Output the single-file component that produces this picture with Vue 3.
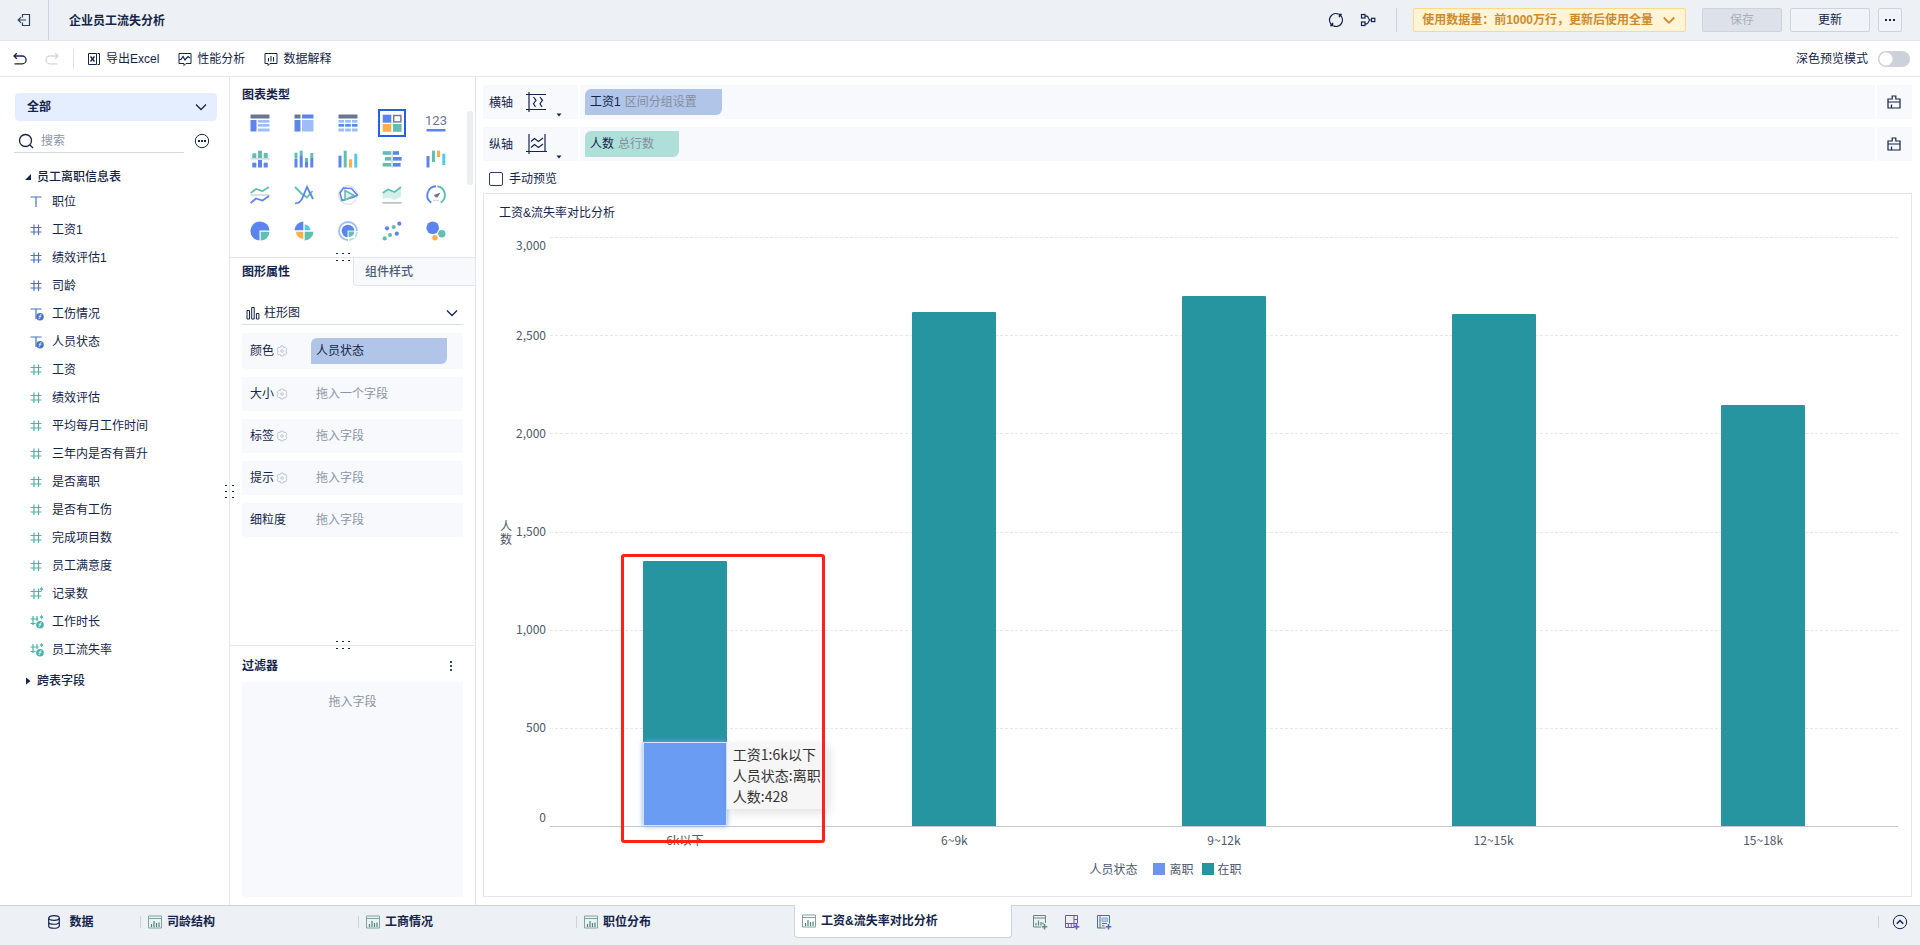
<script setup>
import { ref } from 'vue'

const scope = ref('全部')
const shape = ref('柱形图')
const keyword = ref('')
const manual = ref(false)
const dark = ref(false)

const blue = '#5b84ec', light = '#9ebcf6', teal = '#63beb2', gray = '#6b7690', pale = '#d3d7e0', orange = '#fcb04c', cyan = '#54c6f2'
const r = (x, y, w, h, c) => `<rect x="${x}" y="${y}" width="${w}" height="${h}" fill="${c}"/>`
const l = (pts, c, w = 1.8) => `<polyline points="${pts}" fill="none" stroke="${c}" stroke-width="${w}"/>`
const c = (x, y, rad, color) => `<circle cx="${x}" cy="${y}" r="${rad}" fill="${color}"/>`

const chartTypes = [
  { name: '分组表', art: r(0.5, 1.5, 19, 4, gray) + r(0.5, 7, 6, 11.5, blue) + r(8, 7, 11.5, 2.7, light) + r(8, 11, 11.5, 2.7, light) + r(8, 15.5, 11.5, 3, light) },
  { name: '交叉表', art: r(0.5, 1.5, 6, 4, gray) + r(8, 1.5, 11.5, 4, blue) + r(0.5, 7, 6, 11.5, blue) + r(8, 7, 11.5, 11.5, light) },
  { name: '明细表', art: r(0.5, 1.5, 19, 4, gray) + [0.5, 7.2, 13.9].map(x => r(x, 7, 5.6, 2.7, light) + r(x, 11, 5.6, 2.7, blue) + r(x, 15.5, 5.6, 3, light)).join('') },
  { name: '自定义图表', active: true, art: r(0.7, 1.7, 8.6, 8, blue) + '<rect x="11.7" y="2.5" width="7.2" height="6.4" fill="#fff" stroke="#6b7690" stroke-width="1.4"/>' + r(0.7, 11, 8.6, 7.8, orange) + r(11, 11, 8.6, 7.8, teal) },
  { name: '指标卡', art: '<text x="10" y="12" text-anchor="middle" font-family="Roboto, sans-serif" font-size="13" fill="#6b7690">123</text>' + r(0.5, 16, 19, 2.5, blue) },
  { name: '对比柱形图', art: r(2.3, 4.3, 4, 4.7, teal) + r(8, 1.7, 4, 7.3, teal) + r(13.7, 4, 4, 5, teal) + r(0.5, 9, 19, 1.6, pale) + r(2.3, 13.7, 4, 4.8, blue) + r(8, 11, 4, 7.5, blue) + r(13.7, 13.7, 4, 4.8, blue) },
  { name: '堆积柱形图', art: r(0.5, 3.7, 3, 6, teal) + r(0.5, 10, 3, 8.5, blue) + r(5.7, 1.7, 3, 4.6, teal) + r(5.7, 6.3, 3, 12.2, blue) + r(11, 9, 3, 4, teal) + r(11, 13, 3, 5.5, blue) + r(16.3, 4, 3, 5, teal) + r(16.3, 9, 3, 9.5, blue) },
  { name: '多系列柱形图', art: r(0.5, 6.7, 3, 11.8, blue) + r(5.7, 1.7, 3, 16.8, teal) + r(11, 10.3, 3, 8.2, orange) + r(16.3, 4.7, 3, 13.8, cyan) },
  { name: '对比条形图', art: r(0.7, 2.2, 8.6, 3.6, teal) + r(3, 8, 6.3, 3.6, teal) + r(0.7, 14, 8.6, 3.6, teal) + r(9.3, 1.5, 1.6, 17, pale) + r(11, 2.2, 6, 3.6, blue) + r(11, 8, 8.6, 3.6, blue) + r(11, 14, 7.6, 3.6, blue) },
  { name: '瀑布图', art: r(0.5, 7, 3, 11.5, blue) + r(6, 1.7, 3, 11.3, teal) + r(11, 1.7, 3, 6.3, orange) + r(16.3, 4.7, 3, 11.3, cyan) },
  { name: '对比折线图', art: l('0.7,8 6,4 12.5,6 19,2', teal) + r(0.5, 9.2, 19, 1.6, pale) + l('0.7,18 6,13.5 12.5,15.5 19,11', blue) },
  { name: '折线图', art: l('1,2 7,8 13,12.5 18.5,6', teal) + l('1,18.5 5,17.5 8,14 13,2 19,14', blue) },
  { name: '雷达图', art: '<circle cx="10" cy="10" r="9.3" fill="none" stroke="#d3d7e0"/><polygon points="5.5,3 13.5,3.5 19.3,10 16,12 4,15.5 2,8" fill="none" stroke="#5b84ec" stroke-width="1.6"/><polygon points="7,5.5 16,10.5 7,15" fill="#e6e9ee" stroke="#63beb2" stroke-width="1.6"/>' },
  { name: '面积图', art: '<path d="M.7 8 6 4.5 12.5 7 19 2V11.5L12.5 15 6 12.5.7 14z" fill="#d3efe9"/>' + l('0.7,8 6,4.5 12.5,7 19,2', teal) + r(0.5, 17.2, 19, 1.4, '#a9b1c1') },
  { name: '仪表盘', art: '<path d="M5.2 17.6A9 9 0 0 1 10 1.2" fill="none" stroke="#5b84ec" stroke-width="1.9"/><path d="M11.5 1.2A9 9 0 0 1 14.8 17.6" fill="none" stroke="#63beb2" stroke-width="1.9"/><path d="M8 10 14.5 7.5 11.5 12.5 9 12z" fill="#6b7690"/><path d="M7 15.5h6" stroke="#d3d7e0" stroke-width="1.2"/>' },
  { name: '饼图', art: c(10, 10, 9.6, blue) + '<path d="M9.5 9.5H20V20H9.5z" fill="#fff"/><path d="M10.7 10.7H19.5A9 9 0 0 1 10.7 19.6z" fill="#63beb2"/>' },
  { name: '玫瑰图', art: '<path d="M9.3 9.3V.5A9.3 9.3 0 0 0 .5 9.3z" fill="#5b84ec"/><path d="M10.7 9.3V3.5A6.3 6.3 0 0 1 16.5 9.3z" fill="#54c6f2"/><path d="M9.3 10.7V18A7.3 7.3 0 0 1 2 10.7z" fill="#fcb04c"/><path d="M10.7 10.7V19.5A9 9 0 0 0 19.5 10.7z" fill="#63beb2"/>' },
  { name: '多层饼图', art: '<path d="M10 19A9 9 0 1 1 19 10" fill="none" stroke="#9ebcf6" stroke-width="1.8"/><path d="M19 11.2A9 9 0 0 1 11.2 19" fill="none" stroke="#b5e0d9" stroke-width="1.8"/>' + c(10, 10, 6.3, blue) + '<path d="M9.6 9.6H17V17H9.6z" fill="#fff"/><path d="M10.6 10.6H16.2A6 6 0 0 1 10.6 16.2z" fill="#63beb2"/>' },
  { name: '散点图', art: c(17.3, 2.7, 2.1, blue) + c(5, 7.3, 2.1, blue) + c(14.8, 12.7, 2.1, blue) + c(11.7, 6, 2.1, teal) + c(8, 14, 2.1, teal) + c(2.7, 17.4, 2.1, teal) },
  { name: '聚合气泡图', art: c(6.7, 6.7, 6.3, blue) + c(15.8, 12.7, 3.7, teal) + c(9, 16.8, 2.7, orange) }
]

const fields = [
  { name: '职位', kind: 'text', tone: 'dim' },
  { name: '工资1', kind: 'num', tone: 'dim' },
  { name: '绩效评估1', kind: 'num', tone: 'dim' },
  { name: '司龄', kind: 'num', tone: 'dim' },
  { name: '工伤情况', kind: 'text', tone: 'dim', calc: true },
  { name: '人员状态', kind: 'text', tone: 'dim', calc: true },
  { name: '工资', kind: 'num', tone: 'metric' },
  { name: '绩效评估', kind: 'num', tone: 'metric' },
  { name: '平均每月工作时间', kind: 'num', tone: 'metric' },
  { name: '三年内是否有晋升', kind: 'num', tone: 'metric' },
  { name: '是否离职', kind: 'num', tone: 'metric' },
  { name: '是否有工伤', kind: 'num', tone: 'metric' },
  { name: '完成项目数', kind: 'num', tone: 'metric' },
  { name: '员工满意度', kind: 'num', tone: 'metric' },
  { name: '记录数', kind: 'num', tone: 'metric', star: true },
  { name: '工作时长', kind: 'num', tone: 'metric', star: true, calc: true },
  { name: '员工流失率', kind: 'num', tone: 'metric', star: true, calc: true }
]

const attrs = [
  { name: '颜色', gear: true, value: '人员状态' },
  { name: '大小', gear: true, hint: '拖入一个字段' },
  { name: '标签', gear: true, hint: '拖入字段' },
  { name: '提示', gear: true, hint: '拖入字段' },
  { name: '细粒度', hint: '拖入字段' }
]

const axes = [
  { name: '横轴', field: '工资1', note: '区间分组设置', tone: 'blue' },
  { name: '纵轴', field: '人数', note: '总行数', tone: 'green' }
]

const max = 3000
const ticks = [3000, 2500, 2000, 1500, 1000, 500, 0]
const bars = [
  { label: '6k以下', left: 428, stay: 922 },
  { label: '6~9k', left: 0, stay: 2618 },
  { label: '9~12k', left: 0, stay: 2699 },
  { label: '12~15k', left: 0, stay: 2607 },
  { label: '15~18k', left: 0, stay: 2143 }
]
const pct = v => (v / max) * 100 + '%'

const tabs = ['司龄结构', '工商情况', '职位分布', '工资&流失率对比分析']
</script>

<template>
  <div class="app">
    <header class="header">
      <button class="plain exit" aria-label="退出">
        <svg width="16" height="16" viewBox="0 0 16 16" fill="none" stroke="#2c3f63" stroke-width="1.2"><path d="M6.5 5.5v-3h7v11h-7v-3M2 8h8M5 5.2 2.200 8 5 10.800" /></svg>
      </button>
      <h1 class="title">企业员工流失分析</h1>
      <div class="header-right">
        <button class="plain" aria-label="刷新">
          <svg width="16" height="16" viewBox="0 0 16 16" fill="none" stroke="#14244a" stroke-width="1.300"><path d="M4 13A6.400 6.400 0 0 1 10.500 2.100M12 3A6.400 6.400 0 0 1 5.500 13.900M4.600 10.800V13.500H2.200M11.400 5.200V2.500H13.800" /></svg>
        </button>
        <button class="plain" aria-label="血缘分析">
          <svg width="16" height="16" viewBox="0 0 16 16" fill="none" stroke="#14244a" stroke-width="1.200"><rect x="1.500" y="2.500" width="3.500" height="3.500" /><rect x="1.500" y="10" width="3.500" height="3.500" /><rect x="11.500" y="6.300" width="3.300" height="3.300" /><path d="M5 4.200h2c1.500 0 1.500 3.800 3 3.800h1.500M5 11.800h2c1.500 0 1.500-3.800 3-3.800" /></svg>
        </button>
        <span class="vline tall"></span>
        <button class="volume">使用数据量：前1000万行，更新后使用全量
          <svg width="14" height="14" viewBox="0 0 14 14" fill="none" stroke="currentColor" stroke-width="1.800"><path d="M1.800 4.500 7 9.800l5.200-5.300" /></svg>
        </button>
        <button class="btn" disabled>保存</button>
        <button class="btn">更新</button>
        <button class="btn more" aria-label="更多">
          <svg width="12" height="4" viewBox="0 0 12 4" fill="#14244a"><rect x="1" y="1" width="2" height="2" /><rect x="5" y="1" width="2" height="2" /><rect x="9" y="1" width="2" height="2" /></svg>
        </button>
      </div>
    </header>

    <nav class="toolbar">
      <button class="plain" aria-label="撤销">
        <svg width="16" height="16" viewBox="0 0 16 16" fill="none" stroke="#14244a" stroke-width="1.300"><path d="M4.800 2.200 2 5l2.800 2.800M2 5h8.200a3.900 3.900 0 0 1 0 7.800H2.500" /></svg>
      </button>
      <button class="plain redo" aria-label="重做">
        <svg width="16" height="16" viewBox="0 0 16 16" fill="none" stroke="#d3d7df" stroke-width="1.300"><path d="M11.200 2.200 14 5l-2.800 2.800M14 5H5.800a3.900 3.900 0 0 0 0 7.800h7.700" /></svg>
      </button>
      <span class="vline"></span>
      <button class="plain tool">
        <svg width="14" height="14" viewBox="0 0 14 14" fill="none" stroke="#14244a"><path d="M10.500 1.500h2v11h-2M1.500 1.500h8v11h-8z" /><path d="m3.500 4.500 4 5m0-5-4 5" stroke-width="1.400" /></svg>
        导出Excel
      </button>
      <button class="plain tool">
        <svg width="14" height="14" viewBox="0 0 14 14" fill="none" stroke="#14244a"><path d="M1 1.500h12v10H8l-2 2v-2H1z" /><path d="M1 7.500h2l2-3 2 3.500 3-3.500L12 6" stroke-width="1.200" /></svg>
        性能分析
      </button>
      <button class="plain tool">
        <svg width="14" height="14" viewBox="0 0 14 14" fill="none" stroke="#14244a"><path d="M1 1.500h12v10H6l-2 2v-2H1zM4.500 6v3.500M7 4v5.500M9.500 5v4.500" /></svg>
        数据解释
      </button>
      <label class="switch">深色预览模式<input v-model="dark" type="checkbox" role="switch" /></label>
    </nav>

    <main class="main">
      <aside class="fields">
        <div class="scope">
          <select v-model="scope" aria-label="数据表"><option>全部</option></select>
          <svg class="chev" width="12" height="12" viewBox="0 0 12 12" fill="none" stroke="#14244a" stroke-width="1.300"><path d="M1 3.500 6 8.500l5-5" /></svg>
        </div>
        <div class="search-row">
          <label class="search">
            <svg width="16" height="16" viewBox="0 0 16 16" fill="none" stroke="#14244a" stroke-width="1.300"><circle cx="7.500" cy="7.500" r="6" /><path d="m12 12 3 3" /></svg>
            <input v-model="keyword" type="text" placeholder="搜索" aria-label="搜索" />
          </label>
          <button class="plain" aria-label="更多操作">
            <svg width="16" height="16" viewBox="0 0 16 16" fill="none" stroke="#14244a"><circle cx="8" cy="8" r="6.700" /><path d="M4 8h2M7 8h2M10 8h2" stroke-width="1.800" /></svg>
          </button>
        </div>
        <div class="group">
          <svg width="8" height="8" viewBox="0 0 8 8" fill="#14244a"><path d="M7 1v6H1z" /></svg>员工离职信息表
        </div>
        <ul class="field-list">
          <li v-for="f in fields" :key="f.name">
            <svg :class="f.tone" width="14" height="14" viewBox="0 0 14 14" fill="none" stroke="currentColor" stroke-width="1.200">
              <path v-if="f.kind === 'text'" d="M.5 2h11M6 2v10" />
              <path v-else-if="f.star && f.calc" d="M.5 4h8M.5 8.500h5M3 1v9M7 1v5" />
              <path v-else d="M.5 4.500h11M.5 9h11M4 1.500v10.500M8.500 1.500v10.500" />
              <path v-if="f.star" d="M11.500 0v4M9.800 1l3.400 2M13.200 1 9.800 3" stroke-width=".8" />
              <g v-if="f.calc"><circle cx="10" cy="9.800" r="3.800" fill="currentColor" stroke="none" /><path d="M11.500 7.600c-1.200-.3-1.300.3-1.500 1.900-.2 1.800-.4 2.500-1.500 2.300M8.700 9.300h2.600" stroke="#fff" stroke-width=".8" /></g>
            </svg>
            {{ f.name }}
          </li>
        </ul>
        <div class="group closed">
          <svg width="8" height="8" viewBox="0 0 8 8" fill="#14244a"><path d="M2 .5v7L6.500 4z" /></svg>跨表字段
        </div>
        <span class="grip side"><i v-for="n in 6" :key="n"></i></span>
      </aside>

      <aside class="config">
        <section class="types">
          <h2>图表类型</h2>
          <div class="type-grid">
            <button v-for="t in chartTypes" :key="t.name" class="plain type" :class="{ active: t.active }" :aria-label="t.name">
              <svg width="20" height="20" viewBox="0 0 20 20" v-html="t.art"></svg>
            </button>
          </div>
          <span class="thumb"></span>
        </section>
        <section class="attr">
          <span class="grip"><i v-for="n in 6" :key="n"></i></span>
          <div class="attr-tabs">
            <button class="plain on">图形属性</button>
            <button class="plain off">组件样式</button>
          </div>
          <div class="shape">
            <svg width="14" height="14" viewBox="0 0 14 14" fill="none" stroke="#14244a"><path d="M1 4.500h2.500v8.500H1zM5.700 1.500h2.500V13H5.700zM10.400 7.500h2.500V13h-2.500z" /></svg>
            <select v-model="shape" aria-label="图形"><option>柱形图</option></select>
            <svg class="chev" width="12" height="12" viewBox="0 0 12 12" fill="none" stroke="#14244a" stroke-width="1.300"><path d="M1 3.500 6 8.500l5-5" /></svg>
          </div>
          <div class="attr-rows">
            <div v-for="a in attrs" :key="a.name" class="attr-row" :class="{ filled: a.value }">
              <span class="attr-name">{{ a.name }}
                <svg v-if="a.gear" width="12" height="12" viewBox="0 0 12 12" fill="none" stroke="#c0c6d2" stroke-linejoin="round"><path d="M4.800 1h2.400l.5 1.500 1.800-.3 1.300 2L9.900 6l.9 1.800-1.300 2-1.800-.3-.5 1.500H4.800l-.5-1.500-1.800.3-1.300-2L2.100 6l-.9-1.800 1.300-2 1.800.3z" /><circle cx="6" cy="6" r="1.300" /></svg>
              </span>
              <span v-if="a.value" class="pill blue">{{ a.value }}</span>
              <span v-else class="hint">{{ a.hint }}</span>
            </div>
          </div>
        </section>
        <section class="filter">
          <span class="grip"><i v-for="n in 6" :key="n"></i></span>
          <div class="filter-head">
            <h2>过滤器</h2>
            <button class="plain" aria-label="过滤器菜单"><svg width="4" height="12" viewBox="0 0 4 12" fill="#3a496b"><rect x="1" y="1" width="2" height="2" /><rect x="1" y="5" width="2" height="2" /><rect x="1" y="9" width="2" height="2" /></svg></button>
          </div>
          <div class="drop">拖入字段</div>
        </section>
      </aside>

      <section class="work">
        <div v-for="(a, i) in axes" :key="a.name" class="axis">
          <div class="axis-name">
            <span>{{ a.name }}</span>
            <button class="plain axis-icon" :aria-label="a.name + '设置'">
              <svg v-if="i === 0" width="22" height="22" viewBox="0 0 22 22" fill="none" stroke="#14244a" stroke-width="1.200"><path d="M4 1v20M1 3.500h20M1 18.500h20M8.500 6l2.500 3.300-2.500 3.400 2 3.300M15 6l2.500 3.300-2.500 3.400 2 3.300" /></svg>
              <svg v-else width="22" height="22" viewBox="0 0 22 22" fill="none" stroke="#14244a" stroke-width="1.200"><path d="M4 1v20M20 1v18M1 18.500h21M6 8.500 9.500 5.500l4 3L18 5M6 14.500l3.500-3 4 3L18 11" /></svg>
            </button>
            <svg class="caret" width="6" height="4" viewBox="0 0 6 4" fill="#14244a"><path d="M.5.5h5L3 3.500z" /></svg>
          </div>
          <div class="axis-drop"><span class="pill" :class="a.tone">{{ a.field }} <em>{{ a.note }}</em></span></div>
          <button class="plain axis-clear" aria-label="清空">
            <svg width="14" height="14" viewBox="0 0 14 14" fill="none" stroke="#14244a" stroke-width="1.200"><path d="M1 7V4h4.200V1h3.600v3H13v3zM1 7v6h12V7M4.500 9.500V13" /></svg>
          </button>
        </div>
        <label class="manual"><input v-model="manual" type="checkbox" />手动预览</label>

        <article class="card">
          <h3>工资&amp;流失率对比分析</h3>
          <div class="chart">
            <div class="y-title">人数</div>
            <div class="y-axis">
              <span v-for="t in ticks" :key="t" :class="{ first: t === max, last: t === 0 }" :style="{ bottom: pct(t) }">{{ t.toLocaleString('en-US') }}</span>
            </div>
            <div class="plot">
              <div class="bands"><i v-for="n in 6" :key="n"></i></div>
              <div class="cols">
                <div v-for="b in bars" :key="b.label" class="col">
                  <div class="stack" :style="{ height: pct(b.left + b.stay) }">
                    <div class="stay" :style="{ flexGrow: b.stay }"></div>
                    <div v-if="b.left" class="left" :style="{ flexGrow: b.left }">
                      <div class="tip">工资1:{{ b.label }}<br />人员状态:离职<br />人数:{{ b.left }}</div>
                    </div>
                    <span v-if="b.left" class="mark"></span>
                  </div>
                </div>
              </div>
            </div>
            <div class="x-axis"><span v-for="b in bars" :key="b.label">{{ b.label }}</span></div>
          </div>
          <div class="legend">
            <span class="legend-title">人员状态</span>
            <span class="key gone">离职</span>
            <span class="key here">在职</span>
          </div>
        </article>
      </section>
    </main>

    <footer class="footer">
      <button class="plain data">
        <svg width="14" height="16" viewBox="0 0 14 16" fill="none" stroke="#14244a" stroke-width="1.200"><ellipse cx="7" cy="4" rx="5.300" ry="2.300" /><path d="M1.700 4v8c0 3 10.600 3 10.600 0V4M1.700 8c0 3 10.600 3 10.600 0" /></svg>
        数据
      </button>
      <button v-for="(t, i) in tabs" :key="t" class="plain tab" :class="{ current: i === 3 }">
        <svg width="14" height="14" viewBox="0 0 14 14" fill="none" stroke="#4f8579"><path d="M.5 1h13v12H.5z" stroke="#7da69d" /><path d="M.5 3.500h13" stroke="#7da69d" /><path d="M3.500 9v3M6 6v6M8.500 8v4M11 7.500V12" stroke-width="1.200" /></svg>
        {{ t }}
      </button>
      <div class="adders">
        <button class="plain" aria-label="添加组件">
          <svg width="16" height="16" viewBox="0 0 16 16" fill="none" stroke="#5a8c81"><path d="M9 13H1.500V1.500h12V9M1.500 4h12" /><path d="M4 9v2.500M6.500 6.500v5M9 8v3.500M11 8.500v2" stroke-width="1.200" /><path d="M12.500 10v5.500M9.800 12.700h5.500" stroke-width="1.600" /></svg>
        </button>
        <button class="plain" aria-label="添加仪表板">
          <svg width="16" height="16" viewBox="0 0 16 16" fill="none" stroke="#6a55b5"><path d="M10 13.500H1.500v-12h12V9M1.500 9.500h12M10 1.500v12M10 5.500h3.500M4.300 9.500v4M7.200 9.500v4" /><path d="M12.500 10v5.500M9.800 12.700h5.500" stroke-width="1.600" /></svg>
        </button>
        <button class="plain" aria-label="添加文档">
          <svg width="16" height="16" viewBox="0 0 16 16" fill="none" stroke="#4c6ea8"><path d="M9.500 14H1.500V1.500h12V9.500M4 1.500V14" /><path d="M6 4h5.500v3.500H6z" fill="#b8cbef" stroke="#8faadb" /><path d="M6 9.500h5M6 11.800h2.500" /><path d="M12.500 10v5.500M9.800 12.700h5.500" stroke-width="1.600" /></svg>
        </button>
      </div>
      <button class="plain fold" aria-label="收起">
        <svg width="16" height="16" viewBox="0 0 16 16" fill="none" stroke="#14244a"><circle cx="8" cy="8" r="6.700" /><path d="M4.800 9.800 8 6.500l3.200 3.300" stroke-width="1.500" /></svg>
      </button>
    </footer>
  </div>
</template>

<style>
body { margin: 0; overflow: hidden; }
</style>

<style scoped>
* { box-sizing: border-box; }
.app {
  display: flex; flex-direction: column; height: 100vh; background: #fff;
  color: #14244a; font: 12px/16px "Liberation Sans", "Noto Sans CJK SC", sans-serif;
}
svg { display: block; flex: none; overflow: visible; }
h1, h2, h3 { margin: 0; font-size: 12px; line-height: 16px; }
button, select, input { font: inherit; color: inherit; }
.plain { display: flex; align-items: center; justify-content: center; padding: 0; border: 0; background: none; white-space: nowrap; }
select { appearance: none; width: 100%; height: 100%; border: 0; background: none; outline: 0; }

.header { display: flex; align-items: center; height: 41px; flex: none; background: #edf0f5; border-bottom: 1px solid #e0e4ec; }
.exit { width: 49px; height: 40px; border-right: 1px solid #cdd2dc; }
.title { margin-left: 20px; padding-top: 2px; }
.header-right { display: flex; align-items: center; margin-left: auto; padding-right: 18px; }
.header-right .plain { margin-right: 16px; }
.vline { width: 1px; height: 20px; background: #e0e4ec; }
.vline.tall { height: 24px; margin: 0 16px 0 4px; background: #cdd2dc; }
.volume { display: flex; align-items: center; gap: 9px; height: 24px; padding: 0 9px 0 8px; border: 1px solid #ffd888; border-radius: 2px; background: #fff4d6; color: #cf8a2a; font-weight: 700; margin-right: 8px; }
.btn { width: 80px; height: 24px; margin-left: 8px; padding: 0; border: 1px solid #cdd2dc; border-radius: 2px; background: #f0f3f8; }
.btn:disabled { background: #dde2ea; color: #a7afbd; }
.more { width: 24px; display: flex; align-items: center; justify-content: center; }

.toolbar { display: flex; align-items: center; height: 36px; flex: none; padding: 0 10px 0 12px; border-bottom: 1px solid #e3e6ee; }
.redo { margin: 0 13px 0 16px; }
.toolbar .vline { margin-right: 13px; }
.tool { gap: 5px; margin-right: 19px; }
.switch { display: flex; align-items: center; gap: 10px; margin-left: auto; }
.switch input { appearance: none; width: 32px; height: 16px; margin: 0; border-radius: 8px; background: radial-gradient(circle at 8px 8px, #fff 6px, #cdd1d9 7px); }

.main { display: flex; flex: 1; min-height: 0; }
.fields { position: relative; width: 230px; flex: none; padding-top: 16px; border-right: 1px solid #e3e6ee; }
.scope { position: relative; height: 28px; margin: 0 12px 0 15px; border-radius: 4px; background: #e5eeff; font-weight: 700; }
.scope select { padding: 0 12px; }
.chev { position: absolute; right: 10px; top: 50%; margin-top: -6px; pointer-events: none; }
.search-row { display: flex; align-items: center; gap: 10px; height: 32px; margin-left: 14px; }
.search { display: flex; align-items: center; gap: 7px; width: 170px; height: 32px; padding: 8px 0 0 4px; border-bottom: 1px solid #d3d7df; }
.search input { flex: 1; min-width: 0; padding: 0; border: 0; outline: 0; background: none; }
.search input::placeholder { color: #8b95a7; opacity: 1; }
.search-row .plain { padding-top: 8px; }
.group { display: flex; align-items: center; gap: 5px; height: 16px; margin: 16px 0 0 24px; font-weight: 500; }
.group.closed { margin-top: 9px; }
.field-list { margin: 3px 0 0; padding: 0; list-style: none; }
.field-list li { display: flex; align-items: center; gap: 8px; height: 28px; padding-left: 30px; }
.dim { color: #4a74c4; }
.metric { color: #4bb3a7; }

.grip { position: absolute; left: 106px; top: -5px; display: grid; grid-template-columns: repeat(3, 2px); gap: 6px 4px; }
.grip i { width: 2px; height: 1px; background: #14244a; }
.grip.side { left: auto; right: -5px; top: 408px; grid-template-columns: repeat(2, 2px); gap: 5px; }

.config { display: flex; flex-direction: column; width: 246px; flex: none; border-right: 1px solid #e3e6ee; }
.types { position: relative; height: 180px; padding: 10px 0 0 12px; }
.type-grid { display: grid; grid-template-columns: repeat(5, 28px); gap: 8px 16px; margin: 6px 0 0 4px; }
.type { height: 28px; }
.type.active { border: 2px solid #2a5fe0; }
.thumb { position: absolute; right: 2px; top: 34px; width: 6px; height: 74px; border-radius: 3px; background: #edeef2; }
.attr { position: relative; flex: 1; border-top: 1px solid #e3e6ee; }
.attr-tabs { display: flex; height: 28px; }
.attr-tabs .plain { justify-content: flex-start; padding-left: 12px; }
.on { width: 123px; font-weight: 700; }
.attr-tabs .off { flex: 1; padding-left: 11px; color: #4d5b78; font-weight: 500; background: #f7f9fd; border-left: 1px solid #e0e4ec; border-bottom: 1px solid #e0e4ec; border-bottom-left-radius: 4px; }
.shape { position: relative; display: flex; align-items: center; height: 24px; margin: 15px 12px 0; padding-left: 4px; border-bottom: 1px solid #d9dde6; }
.shape .chev { right: 5px; }
.shape select { padding: 0 4px; }
.attr-rows { display: flex; flex-direction: column; gap: 8px; margin: 8px 12px 0; }
.attr-row { display: flex; align-items: center; height: 34px; padding: 0 16px 0 8px; background: #f7f9fd; }
.attr-row.filled { height: 36px; }
.attr-name { display: flex; align-items: center; gap: 2px; width: 61px; }
.hint { padding-left: 5px; color: #8b95a7; }
.pill { display: flex; align-items: center; gap: 4px; height: 26px; padding: 0 25px 0 5px; border-radius: 6px 0; }
.pill.blue { background: #b0c5e8; }
.pill.green { background: #aedfd9; }
.pill em { font-style: normal; color: #858d9f; }
.attr-row .pill { flex: 1; }
.filter { position: relative; display: flex; flex-direction: column; height: 260px; padding: 12px 12px 8px; border-top: 1px solid #e3e6ee; }
.filter-head { display: flex; justify-content: space-between; padding-right: 10px; }
.drop { flex: 1; margin-top: 8px; padding-top: 12px; background: #f7f9fd; color: #8b95a7; text-align: center; }

.work { display: flex; flex-direction: column; flex: 1; min-width: 0; padding: 8px 8px 8px 7px; }
.axis { display: flex; gap: 2px; height: 34px; margin-bottom: 8px; }
.axis > * { background: #f7f9fd; }
.axis-name { position: relative; display: flex; align-items: center; gap: 12px; width: 95px; padding: 2px 0 0 6px; }
.axis-icon { padding-bottom: 2px; }
.caret { position: absolute; right: 16px; bottom: 2px; }
.axis-drop { display: flex; align-items: center; flex: 1; padding: 0 0 0 5px; }
.axis-clear { width: 35px; padding-right: 2px; }
.manual { display: flex; align-items: center; gap: 6px; height: 20px; margin-left: 6px; }
.manual input { appearance: none; width: 14px; height: 14px; margin: 0; border: 1px solid #2c3f63; border-radius: 2px; background: #fff; }

.card { display: flex; flex-direction: column; flex: 1; min-height: 0; margin-top: 4px; border: 1px solid #e3e6ee; color: #4d5869; font-family: "Noto Sans CJK SC", sans-serif; }
.card h3 { padding: 11px 15px 16px; font-weight: 400; color: #14244a; font-family: "Liberation Sans", "Noto Sans CJK SC", sans-serif; }
.chart { flex: 1; min-height: 0; display: grid; grid-template: 1fr 27px / 28px 38px 1fr; padding-right: 13px; }
.y-title { justify-self: end; align-self: center; width: 12px; line-height: 13px; overflow-wrap: anywhere; }
.y-axis { position: relative; margin-bottom: 2px; }
.y-axis span { position: absolute; right: 4px; transform: translateY(50%); }
.y-axis .first { transform: translateY(100%); }
.y-axis .last { transform: none; }
.plot { position: relative; border-bottom: 1px solid #c5c8cd; }
.bands { display: flex; flex-direction: column; height: 100%; }
.bands i { flex: 1; border-top: 1px dashed #e6e7ea; }
.cols { position: absolute; inset: 0; display: flex; }
.col { flex: 1; display: flex; align-items: flex-end; justify-content: center; }
.stack { position: relative; display: flex; flex-direction: column; width: 84px; }
.stay { flex-basis: 0; background: #2695a0; border-radius: 1px 1px 0 0; }
.left { position: relative; flex-basis: 0; background: #6a9cf3; box-shadow: inset 0 0 0 1px #d5e4ff, 0 0 5px #7fa9f0; }
.tip { position: absolute; left: 100%; top: 0; padding: 2px 6px; background: #f6f6f7; color: #333; font-size: 14px; line-height: 21px; white-space: nowrap; box-shadow: 2px 4px 10px rgba(0, 0, 0, .12); }
.mark { position: absolute; inset: -7px -98px -17px -22px; border: 3px solid #ff2215; border-radius: 3px; z-index: 1; }
.x-axis { grid-column: 3; display: flex; padding-top: 5px; }
.x-axis span { flex: 1; text-align: center; }
.legend { display: flex; align-items: center; justify-content: center; gap: 8px; height: 42px; padding: 0 64px 12px 0; }
.legend-title { margin-right: 8px; }
.key { display: flex; align-items: center; gap: 4px; }
.key::before { content: ""; width: 12px; height: 12px; background: #6f94ee; }
.key.here::before { background: #2695a0; }

.footer { position: relative; display: flex; height: 40px; flex: none; background: #edf0f5; border-top: 1px solid #cdd2dc; font-weight: 700; }
.data { width: 140px; padding-left: 1px; gap: 8px; height: 31px; }
.tab { position: relative; justify-content: flex-start; gap: 5px; width: 218px; height: 31px; padding: 0 8px; }
.tab::before, .fold::before { content: ""; position: absolute; left: 0; top: 10px; width: 1px; height: 12px; background: #cdd2dc; }
.tab.current { margin-top: -1px; height: 33px; padding: 0 7px; background: #fff; border: 1px solid #cdd2dc; border-top: 0; border-radius: 0 0 4px 4px; }
.tab.current::before { display: none; }
.adders { display: flex; gap: 16px; height: 31px; padding-left: 20px; }
.fold { position: relative; margin-left: auto; width: 42px; height: 31px; padding-left: 2px; }
</style>
